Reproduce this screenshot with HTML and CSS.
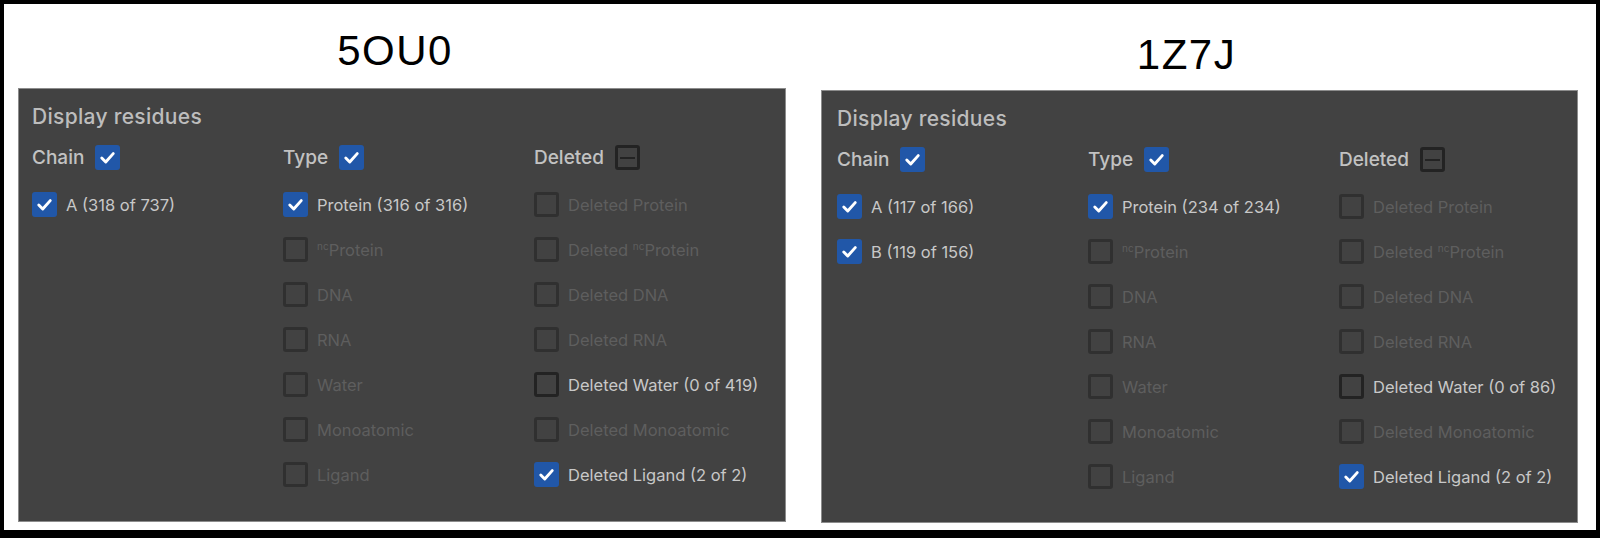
FILE: index.html
```html
<!DOCTYPE html>
<html>
<head>
<meta charset="utf-8">
<link rel="stylesheet" href="styles.css">
</head>
<body>
<div class="frame">
  <section class="col col--a">
    <h1 class="title">5OU0</h1>
    <div class="panel panel--a">
      <div class="panel-title">Display residues</div>
      <div class="grid">
        <div class="group">
          <div class="head"><span>Chain</span><span class="cb on"><svg viewBox="0 0 24 24"><path d="M6.5 12.5l3.8 3.8 7.2-8"/></svg></span></div>
          <div class="item"><span class="cb on"><svg viewBox="0 0 24 24"><path d="M6.5 12.5l3.8 3.8 7.2-8"/></svg></span><span class="lbl">A (318 of 737)</span></div>
        </div>
        <div class="group">
          <div class="head"><span>Type</span><span class="cb on"><svg viewBox="0 0 24 24"><path d="M6.5 12.5l3.8 3.8 7.2-8"/></svg></span></div>
          <div class="item"><span class="cb on"><svg viewBox="0 0 24 24"><path d="M6.5 12.5l3.8 3.8 7.2-8"/></svg></span><span class="lbl">Protein (316 of 316)</span></div>
          <div class="item off"><span class="cb"></span><span class="lbl"><sup>nc</sup>Protein</span></div>
          <div class="item off"><span class="cb"></span><span class="lbl">DNA</span></div>
          <div class="item off"><span class="cb"></span><span class="lbl">RNA</span></div>
          <div class="item off"><span class="cb"></span><span class="lbl">Water</span></div>
          <div class="item off"><span class="cb"></span><span class="lbl">Monoatomic</span></div>
          <div class="item off"><span class="cb"></span><span class="lbl">Ligand</span></div>
        </div>
        <div class="group">
          <div class="head"><span>Deleted</span><span class="cb dark mixed"><i></i></span></div>
          <div class="item off"><span class="cb"></span><span class="lbl">Deleted Protein</span></div>
          <div class="item off"><span class="cb"></span><span class="lbl">Deleted <sup>nc</sup>Protein</span></div>
          <div class="item off"><span class="cb"></span><span class="lbl">Deleted DNA</span></div>
          <div class="item off"><span class="cb"></span><span class="lbl">Deleted RNA</span></div>
          <div class="item"><span class="cb dark"></span><span class="lbl">Deleted Water (0 of 419)</span></div>
          <div class="item off"><span class="cb"></span><span class="lbl">Deleted Monoatomic</span></div>
          <div class="item"><span class="cb on"><svg viewBox="0 0 24 24"><path d="M6.5 12.5l3.8 3.8 7.2-8"/></svg></span><span class="lbl">Deleted Ligand (2 of 2)</span></div>
        </div>
      </div>
    </div>
  </section>
  <section class="col col--b">
    <h1 class="title">1Z7J</h1>
    <div class="panel panel--b">
      <div class="panel-title">Display residues</div>
      <div class="grid">
        <div class="group">
          <div class="head"><span>Chain</span><span class="cb on"><svg viewBox="0 0 24 24"><path d="M6.5 12.5l3.8 3.8 7.2-8"/></svg></span></div>
          <div class="item"><span class="cb on"><svg viewBox="0 0 24 24"><path d="M6.5 12.5l3.8 3.8 7.2-8"/></svg></span><span class="lbl">A (117 of 166)</span></div>
          <div class="item"><span class="cb on"><svg viewBox="0 0 24 24"><path d="M6.5 12.5l3.8 3.8 7.2-8"/></svg></span><span class="lbl">B (119 of 156)</span></div>
        </div>
        <div class="group">
          <div class="head"><span>Type</span><span class="cb on"><svg viewBox="0 0 24 24"><path d="M6.5 12.5l3.8 3.8 7.2-8"/></svg></span></div>
          <div class="item"><span class="cb on"><svg viewBox="0 0 24 24"><path d="M6.5 12.5l3.8 3.8 7.2-8"/></svg></span><span class="lbl">Protein (234 of 234)</span></div>
          <div class="item off"><span class="cb"></span><span class="lbl"><sup>nc</sup>Protein</span></div>
          <div class="item off"><span class="cb"></span><span class="lbl">DNA</span></div>
          <div class="item off"><span class="cb"></span><span class="lbl">RNA</span></div>
          <div class="item off"><span class="cb"></span><span class="lbl">Water</span></div>
          <div class="item off"><span class="cb"></span><span class="lbl">Monoatomic</span></div>
          <div class="item off"><span class="cb"></span><span class="lbl">Ligand</span></div>
        </div>
        <div class="group">
          <div class="head"><span>Deleted</span><span class="cb dark mixed"><i></i></span></div>
          <div class="item off"><span class="cb"></span><span class="lbl">Deleted Protein</span></div>
          <div class="item off"><span class="cb"></span><span class="lbl">Deleted <sup>nc</sup>Protein</span></div>
          <div class="item off"><span class="cb"></span><span class="lbl">Deleted DNA</span></div>
          <div class="item off"><span class="cb"></span><span class="lbl">Deleted RNA</span></div>
          <div class="item"><span class="cb dark"></span><span class="lbl">Deleted Water (0 of 86)</span></div>
          <div class="item off"><span class="cb"></span><span class="lbl">Deleted Monoatomic</span></div>
          <div class="item"><span class="cb on"><svg viewBox="0 0 24 24"><path d="M6.5 12.5l3.8 3.8 7.2-8"/></svg></span><span class="lbl">Deleted Ligand (2 of 2)</span></div>
        </div>
      </div>
    </div>
  </section>
</div>
</body>
</html>
```
FILE: styles.css
```css
* { box-sizing: border-box; }
html, body { margin: 0; padding: 0; background: #fff; }
body { width: 1600px; height: 538px; overflow: hidden; }

.frame {
  width: 1600px;
  height: 538px;
  border: 4px solid #000;
  border-bottom-width: 8px;
  display: flex;
  padding-left: 14px;
  gap: 35px;
  background: #fff;
}

.col { display: flex; flex-direction: column; }
.col--a { width: 768px; }
.col--b { width: 757px; padding-top: 2px; }

.title {
  margin: 0;
  height: 84px;
  padding-top: 10px;
  line-height: 74px;
  font-family: "Liberation Sans", Arial, sans-serif;
  font-weight: 400;
  font-size: 42px;
  letter-spacing: 1.5px;
  color: #000;
  text-align: center;
}
.col--a .title { padding-right: 14px; }
.col--b .title { padding-right: 26px; padding-top: 14px; line-height: 70px; }

.panel {
  height: 434px;
  background: #424242;
  border: 1px solid #8c8c8c;
  padding: 16px 0 0 13px;
  font-family: Inter, "Noto Sans", sans-serif;
  color: #c6c6c6;
}
.panel--b { padding-left: 15px; height: 433px; }

.panel-title {
  font-size: 21px;
  line-height: 24px;
  font-weight: 500;
  letter-spacing: 0.3px;
  color: #bdbdbd;
}

.grid {
  margin-top: 16px;
  display: grid;
  grid-template-columns: 251px 251px 251px;
}

.group { display: flex; flex-direction: column; gap: 20px; }
.head {
  display: flex;
  align-items: center;
  gap: 11px;
  height: 25px;
  font-size: 19px;
  font-weight: 500;
  color: #c2c2c2;
  margin-bottom: 2px;
}

.item {
  display: flex;
  align-items: center;
  gap: 9px;
  height: 25px;
  font-size: 16.5px;
  color: #c8c8c8;
}
.item.off { color: #5e5e5e; }
.item.off .cb { border-color: #303030; }

.lbl sup { font-size: 10px; vertical-align: 6px; line-height: 0; }

.cb {
  flex: none;
  width: 25px;
  height: 25px;
  border-radius: 3px;
  border: 3px solid #2e2e2e;
  background: #424242;
  display: flex;
  align-items: center;
  justify-content: center;
}
.cb.dark { border-color: #232323; }
.cb.on { background: #2157a8; border: none; }
.cb svg { width: 25px; height: 25px; }
.cb svg path { fill: none; stroke: #fff; stroke-width: 2.8; stroke-linecap: round; stroke-linejoin: round; }
.cb.mixed i { display: block; width: 15px; height: 2px; background: #232323; }
```
